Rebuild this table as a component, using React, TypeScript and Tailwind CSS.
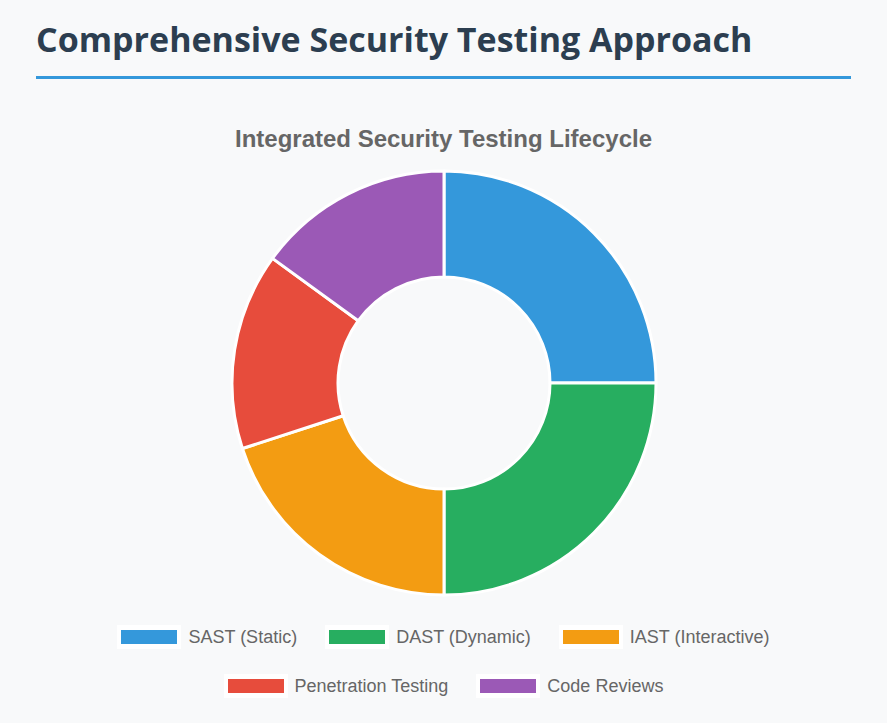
import React from "react";

const segments = [
  { label: "SAST (Static)", value: 25, color: "#3498db" },
  { label: "DAST (Dynamic)", value: 25, color: "#27ae60" },
  { label: "IAST (Interactive)", value: 20, color: "#f39c12" },
  { label: "Penetration Testing", value: 15, color: "#e74c3c" },
  { label: "Code Reviews", value: 15, color: "#9b59b6" },
];

const SIZE = 430;
const C = SIZE / 2;
const R = 212;
const r = 106;

function point(radius: number, angle: number) {
  // angle 0 at top, clockwise
  const a = (angle - 90) * (Math.PI / 180);
  return [C + radius * Math.cos(a), C + radius * Math.sin(a)];
}

function arcPath(start: number, end: number) {
  const large = end - start > 180 ? 1 : 0;
  const [x1, y1] = point(R, start);
  const [x2, y2] = point(R, end);
  const [x3, y3] = point(r, end);
  const [x4, y4] = point(r, start);
  return `M ${x1} ${y1} A ${R} ${R} 0 ${large} 1 ${x2} ${y2} L ${x3} ${y3} A ${r} ${r} 0 ${large} 0 ${x4} ${y4} Z`;
}

function Doughnut() {
  const total = segments.reduce((s, d) => s + d.value, 0);
  let angle = 0;
  return (
    <svg width={SIZE} height={SIZE} viewBox={`0 0 ${SIZE} ${SIZE}`}>
      {segments.map((s) => {
        const start = angle;
        const end = angle + (s.value / total) * 360;
        angle = end;
        return (
          <path
            key={s.label}
            d={arcPath(start, end)}
            fill={s.color}
            stroke="#ffffff"
            strokeWidth={3}
            strokeLinejoin="round"
          />
        );
      })}
    </svg>
  );
}

function LegendItem({ label, color }: { label: string; color: string }) {
  return (
    <div className="flex items-center gap-[7px]">
      <span
        className="box-content block h-[14px] w-[56px] border-x-4 border-y-[5px] border-white"
        style={{ backgroundColor: color }}
      />
      <span className="text-[18px] leading-none text-[#666666]">{label}</span>
    </div>
  );
}

export default function App() {
  return (
    <div
      className="min-h-[723px] bg-[#f8f9fa] px-[36px] pt-[22px]"
      style={{ fontFamily: '"Liberation Sans", Arial, sans-serif' }}
    >
      <h1
        className="border-b-[3px] border-[#3498db] pb-[20px] text-[34px] font-bold leading-[34px] text-[#2c3e50]"
        style={{ fontFamily: '"Open Sans", "Noto Sans", sans-serif' }}
      >
        Comprehensive Security Testing Approach
      </h1>

      <div className="flex flex-col items-center">
        <h2 className="mt-[48px] text-[24px] font-bold leading-[24px] text-[#666666]">
          Integrated Security Testing Lifecycle
        </h2>

        <div className="mt-[17px]">
          <Doughnut />
        </div>

        <div className="mt-[27px] flex flex-col items-center gap-[25px]">
          <div className="flex items-center gap-[28px]">
            {segments.slice(0, 3).map((s) => (
              <LegendItem key={s.label} label={s.label} color={s.color} />
            ))}
          </div>
          <div className="flex items-center gap-[28px]">
            {segments.slice(3).map((s) => (
              <LegendItem key={s.label} label={s.label} color={s.color} />
            ))}
          </div>
        </div>
      </div>
    </div>
  );
}
